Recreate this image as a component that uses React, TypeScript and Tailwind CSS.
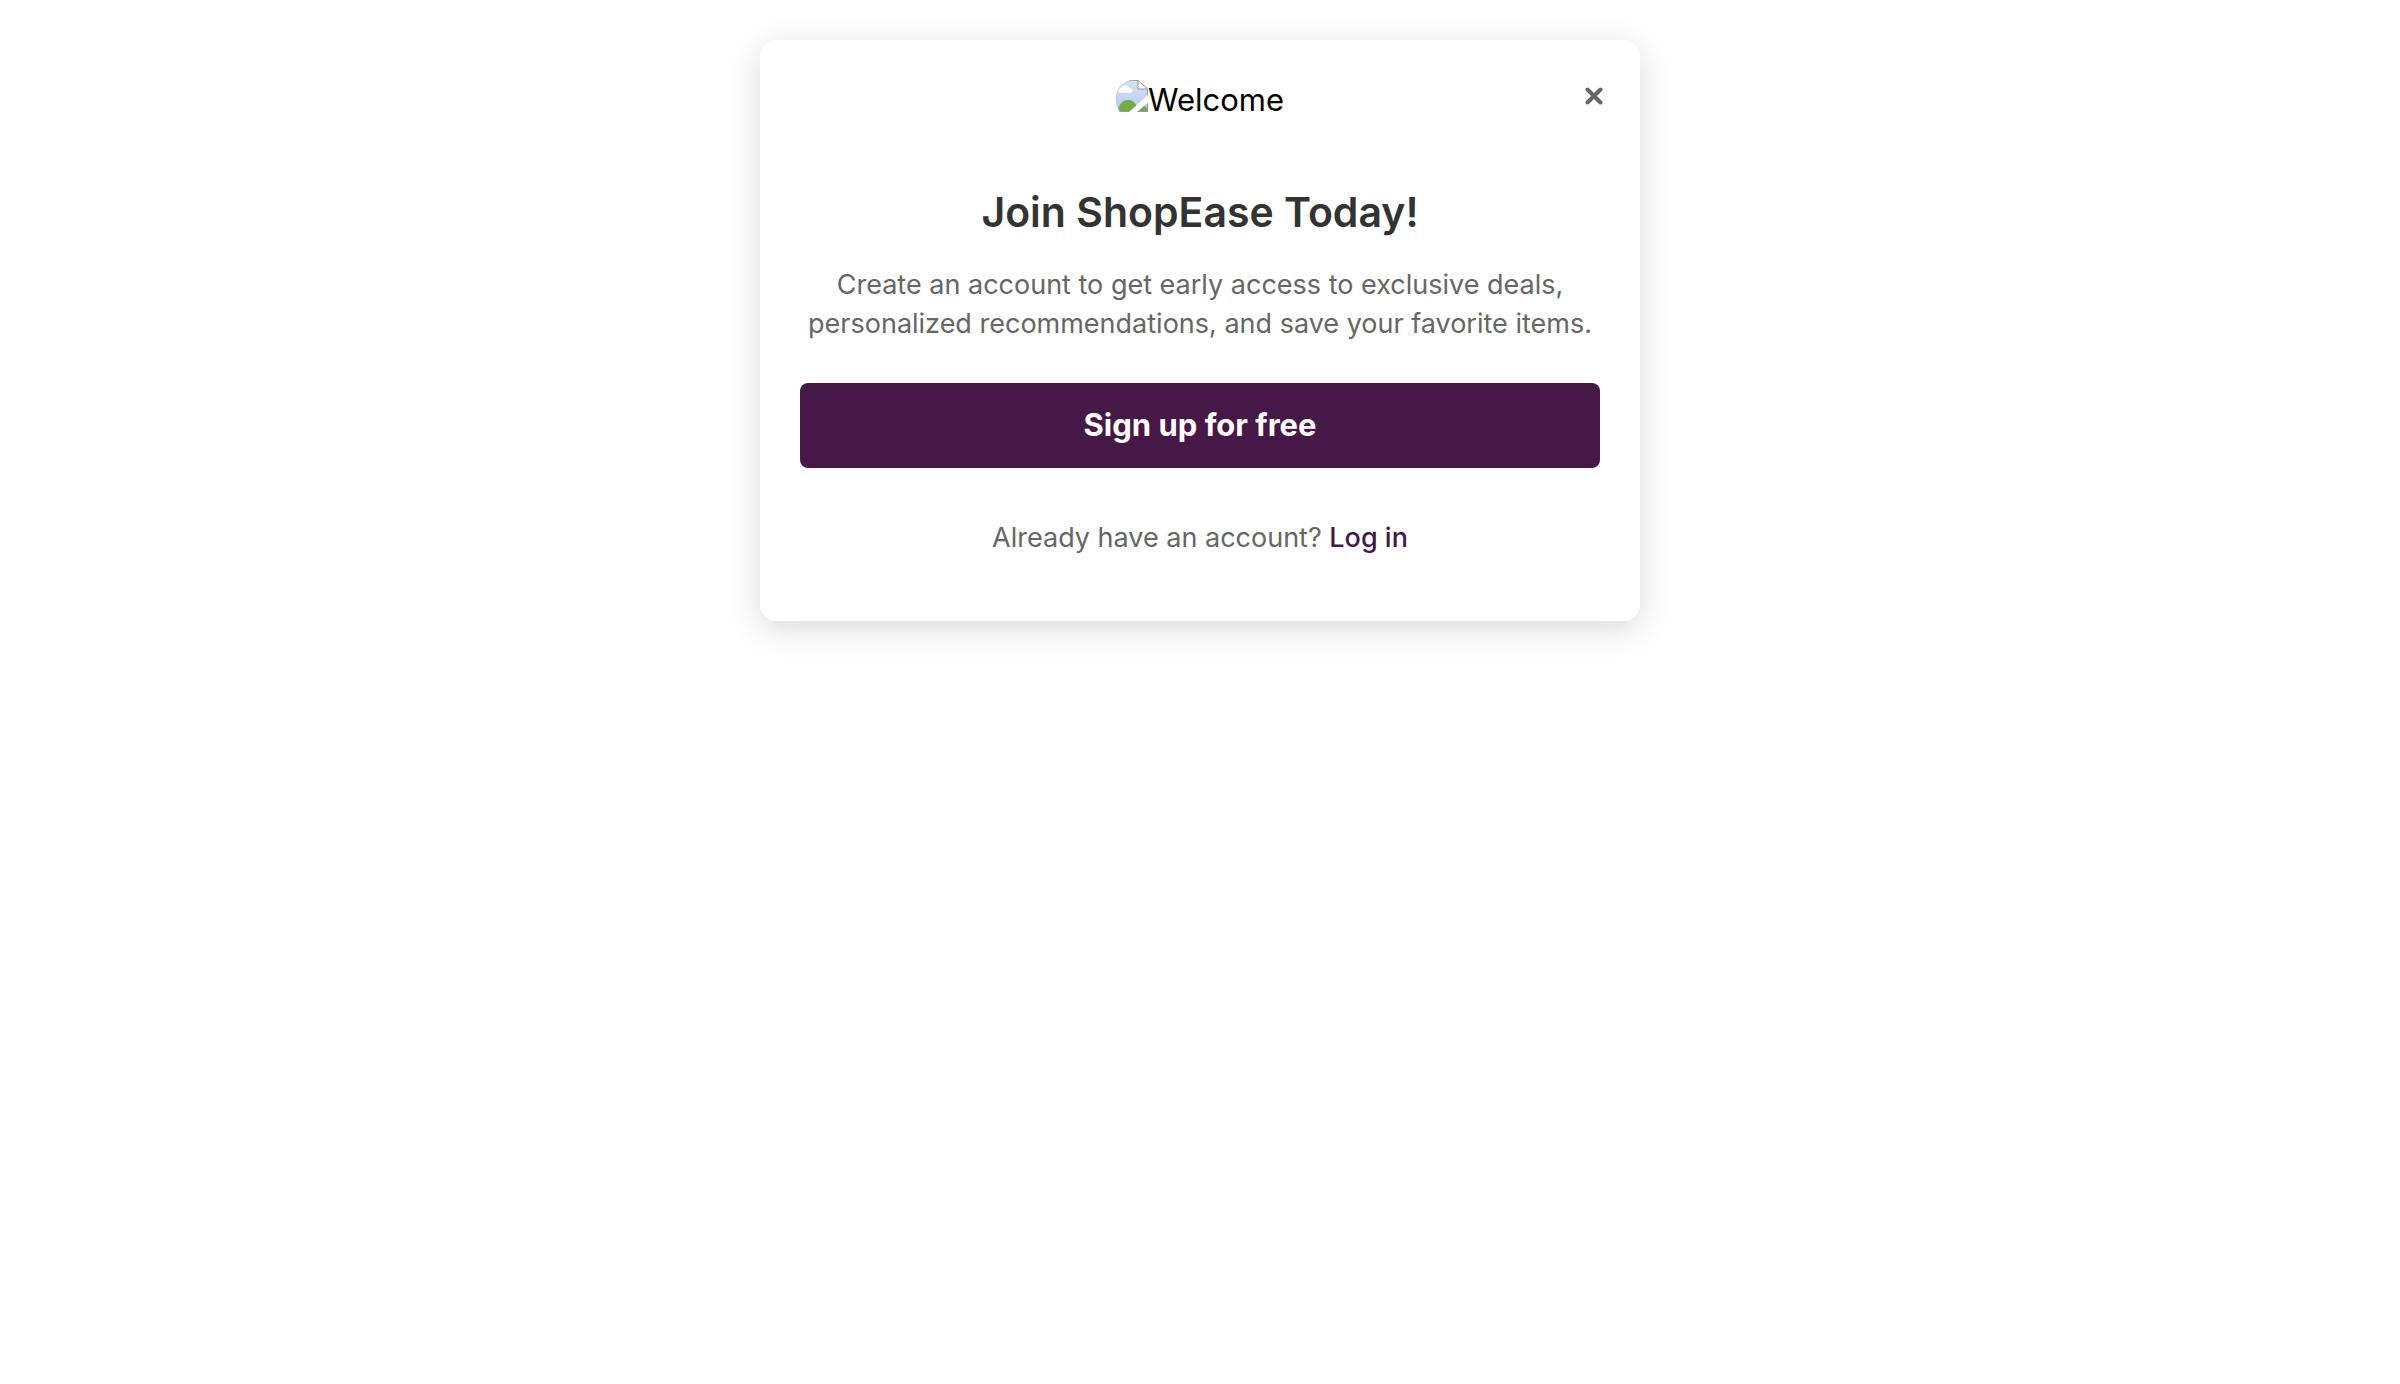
export default function App() {
  return (
    <main className="min-h-screen bg-white px-4 py-10 font-['Inter',sans-serif] text-black">
      <section
        aria-labelledby="signup-title"
        className="relative mx-auto max-w-[880px] rounded-2xl bg-white p-10 text-center shadow-[0_8px_32px_rgba(0,0,0,0.15)]"
      >
        <button
          type="button"
          aria-label="Close"
          className="absolute right-[30px] top-10 flex size-8 items-center justify-center text-[#666666]"
        >
          <svg viewBox="0 0 18 18" className="size-[18px]" fill="none" stroke="currentColor" strokeWidth="4" strokeLinecap="round">
            <path d="M2.5 2.5 15.5 15.5M15.5 2.5 2.5 15.5" />
          </svg>
        </button>

        <div className="flex h-9 items-start justify-center">
          <BrokenImage />
          <span className="text-[31px] leading-10">Welcome</span>
        </div>

        <h1 id="signup-title" className="mt-[68px] text-[41px] font-semibold leading-[56px] text-[#333333]">
          Join ShopEase Today!
        </h1>
        <p className="mt-[25px] text-[27px] leading-[39px] text-[#666666]">
          Create an account to get early access to exclusive deals, personalized recommendations, and save your favorite items.
        </p>
        <button
          type="button"
          className="mt-10 h-[85px] w-full rounded-lg bg-[#451847] text-[31px] font-bold text-white"
        >
          Sign up for free
        </button>
        <p className="mb-6 mt-[50px] text-[27px] leading-[39px] text-[#666666]">
          Already have an account?{" "}
          <a href="#login" className="font-medium text-[#451847]">
            Log in
          </a>
        </p>
      </section>
    </main>
  );
}

function BrokenImage() {
  return (
    <svg viewBox="0 0 32 32" className="size-8 shrink-0" aria-hidden="true">
      <defs>
        <linearGradient id="sky" x1="0" y1="0" x2="0" y2="1">
          <stop offset="0" stopColor="#d5e2f8" />
          <stop offset="1" stopColor="#b8c9ee" />
        </linearGradient>
        <clipPath id="round">
          <path d="M18 0H32V32H4C1 28 0 23 0 18C0 8 8 0 18 0Z" />
        </clipPath>
      </defs>
      <g clipPath="url(#round)">
        <path d="M0 0H22L32 9V32H0Z" fill="url(#sky)" />
        <path d="M5 13a2.5 2.5 0 0 1 0-5a5 5 0 0 1 9 0a2.5 2.5 0 0 1 0 5Z" fill="#fff" />
        <ellipse cx="12" cy="31" rx="10" ry="11" fill="#70ad47" />
        <ellipse cx="25" cy="32" rx="7" ry="7" fill="#70ad47" />
        <path d="M0 31.5H32M31.5 9V32" fill="none" stroke="#999" />
        <path d="M32 15V22.5L21 32H13Z" fill="#fff" />
        <path d="M22 0.5V9H31.5Z" fill="#fff" stroke="#999" />
        <path d="M12 0.5H22" stroke="#999" />
        <path d="M4 32C1 28 0 23 0 18C0 8 8 0 18 0" fill="none" stroke="#b5bccb" />
      </g>
    </svg>
  );
}
